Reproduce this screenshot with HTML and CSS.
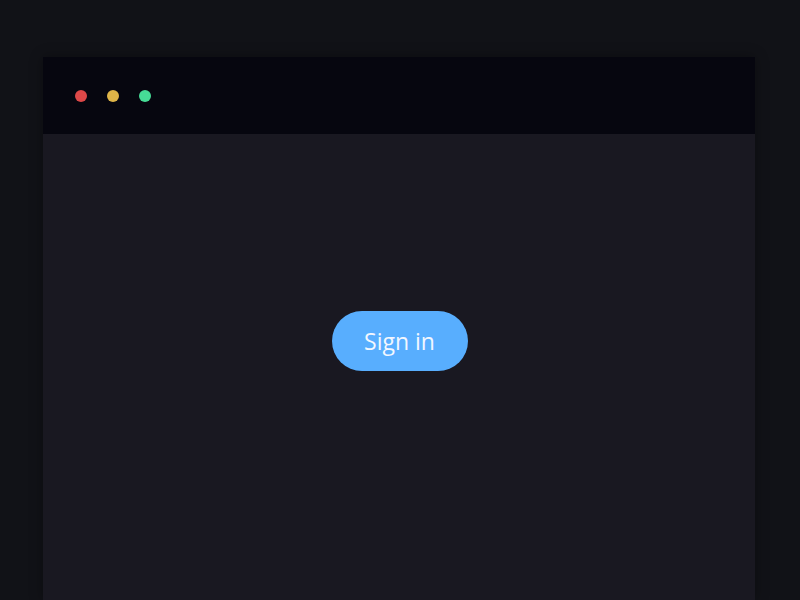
FILE: index.html
```html
<!DOCTYPE html>
<html lang="en">
  <head>
    <meta charset="UTF-8" />
    <meta name="viewport" content="width=device-width, initial-scale=1.0" />
    <title>Sign in</title>
    <link rel="stylesheet" href="styles.css">
  </head>
  <body>
    <div class="window">
      <div class="titlebar">
        <span class="dot red"></span>
        <span class="dot yellow"></span>
        <span class="dot green"></span>
      </div>
      <div class="content">
        <button class="signin">Sign in</button>
      </div>
    </div>
  </body>
</html>
```

FILE: styles.css
```css
html, body {
  height: 100%;
}

body {
  margin: 0;
  padding: 57px 0 0 43px;
  box-sizing: border-box;
  background: #111217;
  font-family: "Open Sans", "Noto Sans", sans-serif;
  overflow: hidden;
}

.window {
  width: 712px;
  height: 100%;
  display: flex;
  flex-direction: column;
  box-shadow: 0 0 12px rgba(0, 0, 0, 0.35);
}

.titlebar {
  height: 77px;
  flex-shrink: 0;
  background: #06060f;
  display: flex;
  align-items: center;
  gap: 20px;
  padding-left: 32px;
  box-sizing: border-box;
}

.dot {
  width: 12px;
  height: 12px;
  border-radius: 50%;
}

.red { background: #dd4848; }
.yellow { background: #dfb548; }
.green { background: #46dc96; }

.content {
  flex: 1;
  background: #191821;
  display: flex;
  justify-content: center;
  align-items: flex-start;
  padding-top: 177px;
  padding-left: 1px;
}

.signin {
  width: 136px;
  height: 60px;
  border: none;
  border-radius: 30px;
  background: #58aefe;
  color: #f2f7ff;
  font-family: "Open Sans", "Noto Sans", sans-serif;
  font-size: 23px;
  padding: 0;
  cursor: pointer;
}
```
